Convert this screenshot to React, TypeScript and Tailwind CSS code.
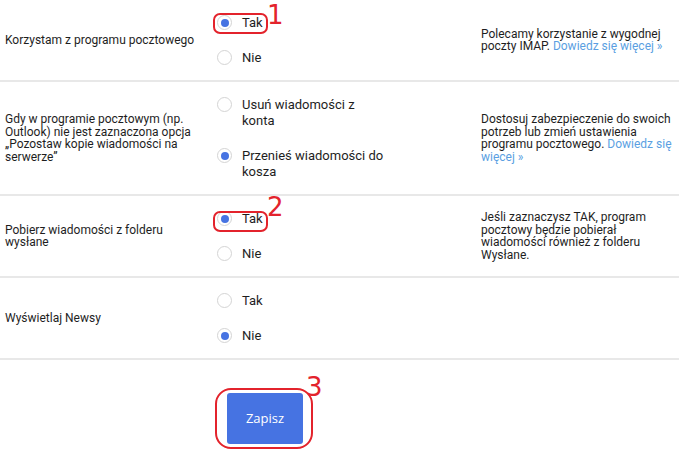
import type { ReactNode } from 'react';

type Opt = { label: string; checked?: boolean; mark?: string };

type Row = {
  title: ReactNode;
  options: Opt[];
  hint?: ReactNode;
};

const link = 'text-[#5b9fe2]';

const rows: Row[] = [
  {
    title: 'Korzystam z programu pocztowego',
    options: [{ label: 'Tak', checked: true, mark: '1' }, { label: 'Nie' }],
    hint: (
      <>
        Polecamy korzystanie z wygodnej poczty IMAP. <span className={link}>Dowiedz się więcej »</span>
      </>
    ),
  },
  {
    title: 'Gdy w programie pocztowym (np. Outlook) nie jest zaznaczona opcja „Pozostaw kopie wiadomości na serwerze”',
    options: [{ label: 'Usuń wiadomości z konta' }, { label: 'Przenieś wiadomości do kosza', checked: true }],
    hint: (
      <>
        Dostosuj zabezpieczenie do swoich potrzeb lub zmień ustawienia programu pocztowego.{' '}
        <span className={link}>Dowiedz się więcej »</span>
      </>
    ),
  },
  {
    title: 'Pobierz wiadomości z folderu wysłane',
    options: [{ label: 'Tak', checked: true, mark: '2' }, { label: 'Nie' }],
    hint: 'Jeśli zaznaczysz TAK, program pocztowy będzie pobierał wiadomości również z folderu Wysłane.',
  },
  {
    title: 'Wyświetlaj Newsy',
    options: [{ label: 'Tak' }, { label: 'Nie', checked: true }],
  },
];

function Radio({ checked }: { checked?: boolean }) {
  return (
    <span className="mt-[0.5px] flex h-[15px] w-[15px] shrink-0 items-center justify-center rounded-full border border-[#d4d4d4] bg-white">
      {checked && <span className="h-[8px] w-[8px] rounded-full bg-[#4673e2]" />}
    </span>
  );
}

function Option({ opt }: { opt: Opt }) {
  return (
    <div className="relative flex items-start gap-[10px] py-[9.5px]">
      <Radio checked={opt.checked} />
      <span className="max-w-[147px] text-[13px] leading-[16px] text-[#1e1e1e]">{opt.label}</span>
      {opt.mark === '1' && (
        <>
          <span className="absolute left-[-4px] top-[8px] h-[21px] w-[55px] rounded-[7px] border-2 border-[#e3232c]" />
          <span className="absolute left-[50px] top-[-3px] text-[26px] leading-none text-[#e3232c] font-['DejaVu_Sans',sans-serif]">
            1
          </span>
        </>
      )}
      {opt.mark === '2' && (
        <>
          <span className="absolute left-[-4px] top-[10px] h-[21px] w-[55px] rounded-[7px] border-2 border-[#e3232c]" />
          <span className="absolute left-[50px] top-[-7px] text-[26px] leading-none text-[#e3232c] font-['DejaVu_Sans',sans-serif]">
            2
          </span>
        </>
      )}
    </div>
  );
}

export default function App() {
  return (
    <div className="min-h-[454px] bg-white font-['Roboto',sans-serif] text-[#1e1e1e]">
      {rows.map((row, i) => (
        <div key={i} className="grid grid-cols-[217px_264px_1fr] border-b-2 border-[#e8e8e8] py-[5px]">
          <div className="flex items-center pl-[5px] pr-[22px] text-[12px] leading-[12.5px]">{row.title}</div>
          <div className="flex flex-col">
            {row.options.map((o) => (
              <Option key={o.label} opt={o} />
            ))}
          </div>
          <div className="flex items-center text-[12px] leading-[12.5px]">
            <p>{row.hint}</p>
          </div>
        </div>
      ))}
      <div className="pl-[227px] pt-[33px]">
        <div className="relative inline-block">
          <button className="h-[51px] w-[76px] rounded-[3px] bg-[#4673e2] text-[13px] text-white font-['Open_Sans',sans-serif]">
            Zapisz
          </button>
          <span className="absolute left-[-12px] top-[-5px] h-[61px] w-[98px] rounded-[16px] border-2 border-[#e3232c]" />
          <span className="absolute left-[79px] top-[-19px] text-[26px] leading-none text-[#e3232c] font-['DejaVu_Sans',sans-serif]">
            3
          </span>
        </div>
      </div>
    </div>
  );
}
